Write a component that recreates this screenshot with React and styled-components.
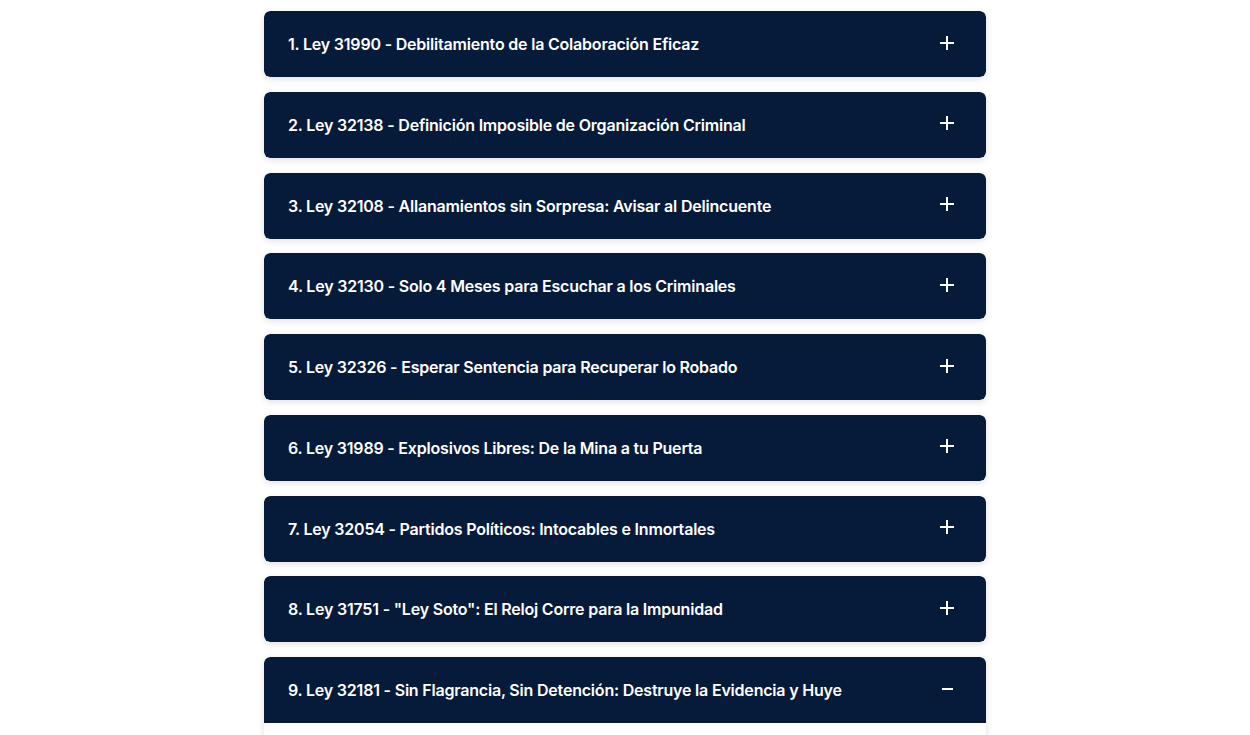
import React from "react";
import styled, { createGlobalStyle } from "styled-components";

const Global = createGlobalStyle`
  html, body { margin: 0; padding: 0; background: #ffffff; }
  body { font-family: "Inter", "Noto Sans", sans-serif; overflow: hidden; }
`;

const Page = styled.div`
  height: 735px;
  overflow: hidden;
  display: flex;
  justify-content: center;
  align-items: flex-start;
  padding-top: 11px;
  box-sizing: border-box;
`;

const List = styled.div`
  width: 722px;
  flex-shrink: 0;
  display: flex;
  flex-direction: column;
  gap: 14.75px;
`;

const Item = styled.div`
  flex-shrink: 0;
  border-radius: 6px;
  overflow: hidden;
  background: #ffffff;
  box-shadow: 0 2px 6px rgba(0, 0, 0, 0.12);
`;

const Header = styled.div`
  height: 66px;
  box-sizing: border-box;
  background: #061a3a;
  color: #ffffff;
  display: flex;
  align-items: center;
  justify-content: space-between;
  padding: 0 32px 0 24px;
  border-radius: ${(p) => (p.$open ? "6px 6px 0 0" : "6px")};
`;

const Title = styled.span`
  font-size: 16px;
  font-weight: 600;
  letter-spacing: -0.2px;
`;

const Toggle = styled.span`
  position: relative;
  width: 14px;
  height: 14px;
  margin-top: -3px;
  &::before, &::after {
    content: "";
    position: absolute;
    background: #ffffff;
  }
  &::before {
    left: ${(p) => (p.$open ? "1.5px" : "0")};
    right: ${(p) => (p.$open ? "1.5px" : "0")};
    top: 6px;
    height: 2px;
  }
  &::after {
    display: ${(p) => (p.$open ? "none" : "block")};
    top: 0;
    bottom: 0;
    left: 6px;
    width: 2px;
  }
`;

const Body = styled.div`
  height: 60px;
  background: #ffffff;
`;

const items = [
  "1. Ley 31990 - Debilitamiento de la Colaboración Eficaz",
  "2. Ley 32138 - Definición Imposible de Organización Criminal",
  "3. Ley 32108 - Allanamientos sin Sorpresa: Avisar al Delincuente",
  "4. Ley 32130 - Solo 4 Meses para Escuchar a los Criminales",
  "5. Ley 32326 - Esperar Sentencia para Recuperar lo Robado",
  "6. Ley 31989 - Explosivos Libres: De la Mina a tu Puerta",
  "7. Ley 32054 - Partidos Políticos: Intocables e Inmortales",
  "8. Ley 31751 - \"Ley Soto\": El Reloj Corre para la Impunidad",
  "9. Ley 32181 - Sin Flagrancia, Sin Detención: Destruye la Evidencia y Huye",
];

export default function App() {
  return (
    <>
      <Global />
      <Page>
        <List>
          {items.map((t, i) => {
            const open = i === items.length - 1;
            return (
              <Item key={i}>
                <Header $open={open}>
                  <Title>{t}</Title>
                  <Toggle $open={open} />
                </Header>
                {open && <Body />}
              </Item>
            );
          })}
        </List>
      </Page>
    </>
  );
}
